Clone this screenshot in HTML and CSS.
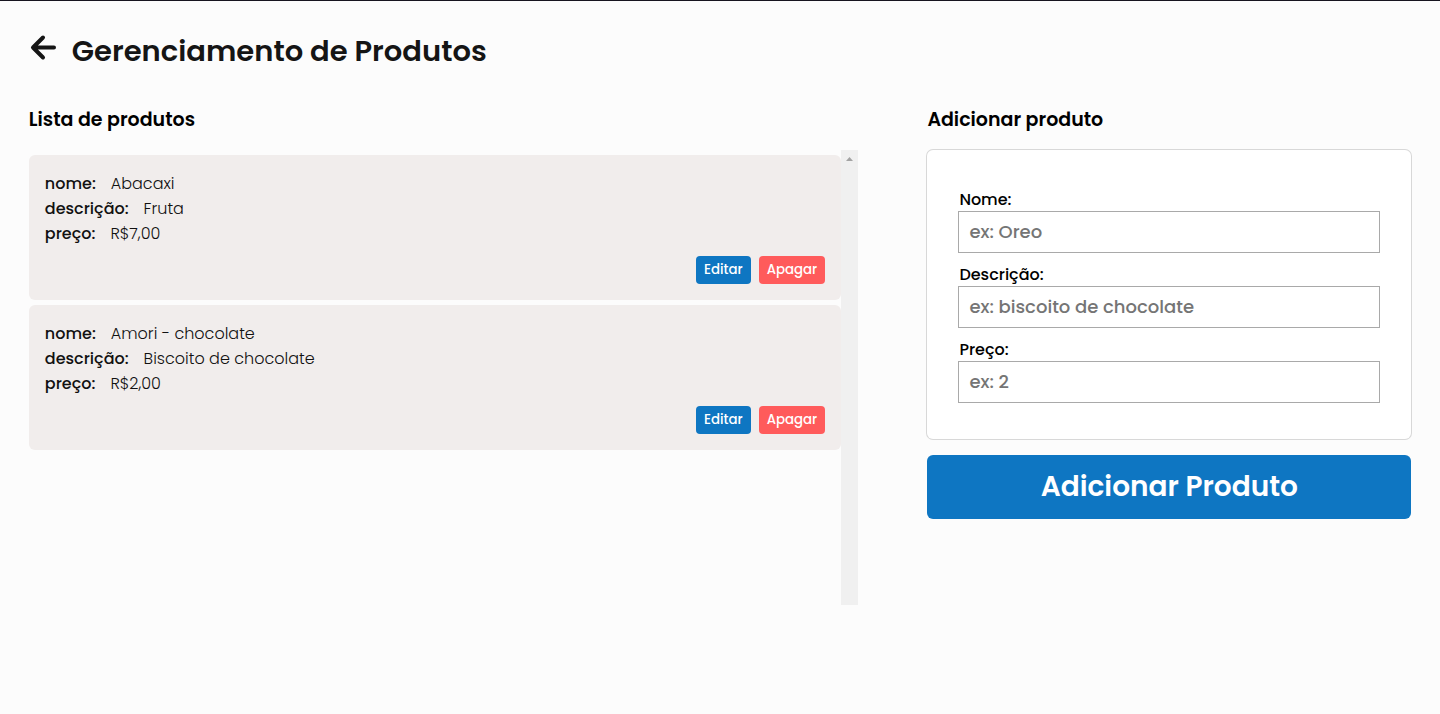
FILE: index.html
```
<!DOCTYPE html>
<html lang="pt-BR">
<head>
  <meta charset="UTF-8">
  <meta name="viewport" content="width=device-width, initial-scale=1">
  <title>Gerenciamento de Produtos</title>
  <link rel="stylesheet" href="styles.css">
</head>
<body>
  <header class="header">
    <a class="back" href="#" aria-label="Voltar">
      <svg class="back-icon" viewBox="0 0 28 28" aria-hidden="true">
        <path d="M13.500 3.500 3.500 13.500l10 10M4 13.500H24.500"/>
      </svg>
    </a>
    <h1 class="title">Gerenciamento de Produtos</h1>
  </header>
  <main class="content">
    <section class="products">
      <h2 class="section-title">Lista de produtos</h2>
      <div class="list-frame">
        <ul class="list">
          <li class="card">
            <p class="field"><strong class="field-name">nome:</strong><span>Abacaxi</span></p>
            <p class="field"><strong class="field-name">descrição:</strong><span>Fruta</span></p>
            <p class="field"><strong class="field-name">preço:</strong><span>R$7,00</span></p>
            <div class="actions">
              <button class="btn btn-edit" type="button">Editar</button>
              <button class="btn btn-delete" type="button">Apagar</button>
            </div>
          </li>
          <li class="card">
            <p class="field"><strong class="field-name">nome:</strong><span>Amori - chocolate</span></p>
            <p class="field"><strong class="field-name">descrição:</strong><span>Biscoito de chocolate</span></p>
            <p class="field"><strong class="field-name">preço:</strong><span>R$2,00</span></p>
            <div class="actions">
              <button class="btn btn-edit" type="button">Editar</button>
              <button class="btn btn-delete" type="button">Apagar</button>
            </div>
          </li>
        </ul>
        <div class="track" aria-hidden="true">
          <svg class="track-arrow" viewBox="0 0 7 4"><path d="M0 4 3.500 0 7 4z"/></svg>
        </div>
      </div>
    </section>
    <section class="add">
      <h2 class="section-title">Adicionar produto</h2>
      <form class="form">
        <div class="form-card">
          <div class="form-row">
            <label class="label" for="nome">Nome:</label>
            <input class="input" id="nome" type="text" placeholder="ex: Oreo">
          </div>
          <div class="form-row">
            <label class="label" for="descricao">Descrição:</label>
            <input class="input" id="descricao" type="text" placeholder="ex: biscoito de chocolate">
          </div>
          <div class="form-row">
            <label class="label" for="preco">Preço:</label>
            <input class="input" id="preco" type="text" placeholder="ex: 2">
          </div>
        </div>
        <button class="submit" type="submit">Adicionar Produto</button>
      </form>
    </section>
  </main>
</body>
</html>
```
FILE: styles.css
```
* {
  box-sizing: border-box;
  margin: 0;
  padding: 0;
}

body {
  min-height: 100vh;
  border-top: 1px solid #17141f;
  background: #fcfcfc;
  color: #000;
  font-family: Poppins, Inter, sans-serif;
  font-size: 16px;
}

button,
input {
  font-family: inherit;
}

.header {
  display: flex;
  align-items: center;
  gap: 14px;
  padding: 28px 2% 0;
  color: #151515;
}

.back {
  display: flex;
  padding-bottom: 6px;
  color: inherit;
}

.back-icon {
  width: 29px;
  height: 28px;
  fill: none;
  stroke: currentColor;
  stroke-width: 4;
  stroke-linecap: round;
  stroke-linejoin: round;
}

.title {
  font-size: 29px;
  font-weight: 600;
  line-height: 44px;
}

.content {
  display: flex;
  justify-content: space-between;
  padding: 32px 2%;
}

.products {
  width: 60%;
}

.add {
  width: 35%;
}

.section-title {
  padding-bottom: 15px;
  font-size: 19px;
  font-weight: 600;
  line-height: 30px;
}

.list-frame {
  display: flex;
  min-height: 455px;
}

.list {
  display: flex;
  flex: 1;
  flex-direction: column;
  gap: 5px;
  padding-top: 5px;
  list-style: none;
}

.card {
  padding: 16px;
  border-radius: 6px;
  background: #f1edec;
  color: #111;
}

.field {
  display: flex;
  gap: 15px;
  font-weight: 300;
  line-height: 25px;
}

.field-name {
  font-weight: 500;
}

.actions {
  display: flex;
  justify-content: flex-end;
  gap: 8px;
  padding-top: 10px;
}

.btn {
  height: 28px;
  padding: 0 8px;
  border: 0;
  border-radius: 4px;
  color: #fff;
  font-weight: 500;
}

.btn-edit {
  background: #0e76c2;
}

.btn-delete {
  background: #ff5b5b;
}

.track {
  width: 17px;
  padding-top: 7px;
  background: #f0f0f0;
}

.track-arrow {
  display: block;
  width: 7px;
  height: 4px;
  margin: 0 auto;
  fill: #a3a3a3;
}

.form {
  display: flex;
  flex-direction: column;
  gap: 16px;
}

.form-card {
  display: flex;
  flex-direction: column;
  gap: 10px;
  padding: 38px 31px 36px;
  border-radius: 6px;
  background: #fff;
  box-shadow: 0 0 0 1px #d8d8d8;
}

.label {
  display: block;
  padding-left: 1px;
  font-weight: 500;
  line-height: 23px;
}

.input {
  display: block;
  width: 100%;
  height: 42px;
  padding: 0 10px 2px;
  border: 1px solid #a9a9a9;
  background: #fff;
  font-size: 18px;
  font-weight: 500;
}

.input::placeholder {
  color: #757575;
}

.submit {
  height: 64px;
  border: 0;
  border-radius: 6px;
  background: #0e76c2;
  color: #fff;
  font-size: 28px;
  font-weight: 600;
}
```
